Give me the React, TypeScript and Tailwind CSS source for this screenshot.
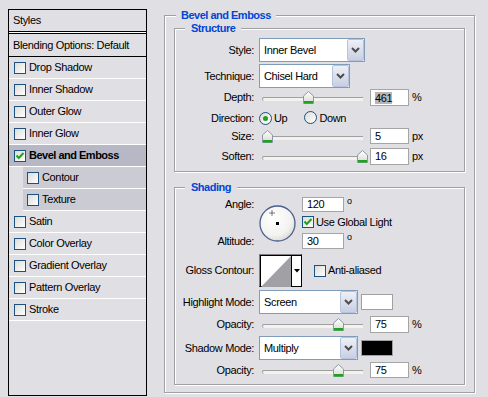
import React from "react";

const FONT = { fontFamily: '"Liberation Sans", Arial, sans-serif' };

function CheckMark() {
  return (
    <svg width="10" height="10" viewBox="0 0 10 10" className="absolute left-[0px] top-[0px]">
      <path d="M1.5 4.5 L3.8 7 L8.5 2" fill="none" stroke="#21a121" strokeWidth="2" />
    </svg>
  );
}

function Checkbox({ checked = false }: { checked?: boolean }) {
  return (
    <span className="relative inline-block shrink-0 w-[12px] h-[12px] border border-[#1c5180] bg-gradient-to-br from-[#dcdcd7] to-white">
      {checked && <CheckMark />}
    </span>
  );
}

function Radio({ checked = false }: { checked?: boolean }) {
  return (
    <span className="relative inline-flex items-center justify-center shrink-0 w-[13px] h-[13px] rounded-full border border-[#1c5180] bg-gradient-to-br from-[#dcdcd7] to-white">
      {checked && <span className="w-[5px] h-[5px] rounded-full bg-[#21a121]" />}
    </span>
  );
}

function Chevron() {
  return (
    <svg width="9" height="6" viewBox="0 0 9 6">
      <path d="M1 1 L4.5 4.5 L8 1" fill="none" stroke="#4d4d4d" strokeWidth="2" />
    </svg>
  );
}

function Select({ value, className }: { value: string; className: string }) {
  return (
    <div className={`flex h-[24px] border border-[#7f9db9] bg-white ${className}`}>
      <div className="flex-1 pl-[4px] flex items-center text-black">{value}</div>
      <div className="w-[17px] h-full flex items-center justify-center border border-[#b4c3df] rounded-[2px] bg-gradient-to-b from-[#eef0f6] to-[#c9cfe2]">
        <Chevron />
      </div>
    </div>
  );
}

function Input({ value, className, selected = false }: { value: string; className: string; selected?: boolean }) {
  return (
    <div className={`flex items-center border border-[#a5a5a5] bg-white pl-[4px] ${className}`}>
      {selected ? <span className="bg-[#b5b6bd] leading-[12px]">{value}</span> : <span>{value}</span>}
    </div>
  );
}

function Thumb() {
  return (
    <svg width="11" height="13" viewBox="0 0 11 13">
      <defs>
        <linearGradient id="tg" x1="0" y1="0" x2="0" y2="1">
          <stop offset="0" stopColor="#ffffff" />
          <stop offset="1" stopColor="#d8d8d4" />
        </linearGradient>
      </defs>
      <path d="M0.5 12.5 V5 L5.5 0.5 L10.5 5 V12.5 Z" fill="url(#tg)" stroke="#8a9aa8" />
      <rect x="1" y="10" width="9" height="2.5" fill="#21a121" />
    </svg>
  );
}

function Slider({ thumb }: { thumb: string }) {
  return (
    <div className="relative w-[106px] h-[13px] ml-[3px]">
      <div className="absolute left-0 top-[6px] w-[101px] h-[4px] border-t border-l border-[#a0a0a0] rounded-l-full bg-[#f3f2ec]" />
      <div className={`absolute top-0 ${thumb}`}>
        <Thumb />
      </div>
    </div>
  );
}

function Label({ children }: { children: React.ReactNode }) {
  return <div className="w-[79px] shrink-0 text-right whitespace-nowrap">{children}</div>;
}

function SliderRow({ label, thumb, value, unit, hclass, selected = false }: { label: string; thumb: string; value: string; unit: string; hclass: string; selected?: boolean }) {
  return (
    <div className={`flex items-center ${hclass}`}>
      <Label>{label}</Label>
      <div className="ml-[5px] flex items-center">
        <Slider thumb={thumb} />
        <Input value={value} selected={selected} className={`ml-[2px] w-[39px] ${hclass}`} />
        <span className="ml-[3px]">{unit}</span>
      </div>
    </div>
  );
}

function Group({ title, className, titleGap, children }: { title: string; className: string; titleGap: string; children: React.ReactNode }) {
  return (
    <div className={`relative border border-[#a0a0a4] shadow-[inset_1px_1px_0_#ffffff,1px_1px_0_#ffffff] ${className}`}>
      <div className={`absolute top-[-8px] bg-[#e0dfe3] text-[#0046d5] font-bold tracking-[-0.5px] leading-[14px] ${titleGap}`}>{title}</div>
      {children}
    </div>
  );
}

function StyleRow({ label, checked = false, bold = false, indent = false, highlight = false }: { label: string; checked?: boolean; bold?: boolean; indent?: boolean; highlight?: boolean }) {
  if (indent) {
    return (
      <div className="flex h-[22px]">
        <div className="w-[14px]" />
        <div className="flex-1 flex items-center bg-[#cacbd3] border-b border-white pl-[4px]">
          <Checkbox />
          <span className="ml-[3px]">{label}</span>
        </div>
      </div>
    );
  }
  return (
    <div className={`flex items-center h-[22px] border-b border-white pl-[5px] ${highlight ? "bg-[#b6b8c6]" : ""}`}>
      <Checkbox checked={checked} />
      <span className={`ml-[3px] ${bold ? "font-bold tracking-[-0.5px]" : ""}`}>{label}</span>
    </div>
  );
}

export default function App() {
  return (
    <div style={FONT} className="w-[488px] h-[397px] bg-[#e0dfe3] flex pt-[9px] pl-[8px] text-[11px] tracking-[-0.35px] text-black leading-none overflow-hidden">
      {/* Left Styles panel */}
      <div className="w-[139px] h-[387px] border border-black flex flex-col shrink-0">
        <div className="h-[22px] flex items-center pl-[4px] border-b border-black">Styles</div>
        <div className="h-[1px] bg-white" />
        <div className="h-[24px] flex items-center pl-[4px] border-t border-b border-black">Blending Options: Default</div>
        <StyleRow label="Drop Shadow" />
        <StyleRow label="Inner Shadow" />
        <StyleRow label="Outer Glow" />
        <StyleRow label="Inner Glow" />
        <StyleRow label="Bevel and Emboss" checked bold highlight />
        <StyleRow label="Contour" indent />
        <StyleRow label="Texture" indent />
        <StyleRow label="Satin" />
        <StyleRow label="Color Overlay" />
        <StyleRow label="Gradient Overlay" />
        <StyleRow label="Pattern Overlay" />
        <StyleRow label="Stroke" />
      </div>

      {/* Right panel */}
      <Group title="Bevel and Emboss" className="ml-[17px] mt-[6px] w-[311px] h-[378px] shrink-0" titleGap="left-[11px] px-[5px]">
        <div className="flex flex-col pl-[9px] pt-[12px]">
          <Group title="Structure" className="w-[291px] h-[144px]" titleGap="left-[10px] px-[6px]">
            <div className="flex flex-col pt-[9px]">
              <div className="flex items-center h-[24px]">
                <Label>Style:</Label>
                <Select value="Inner Bevel" className="ml-[5px] w-[106px]" />
              </div>
              <div className="flex items-center h-[24px] mt-[2px]">
                <Label>Technique:</Label>
                <Select value="Chisel Hard" className="ml-[5px] w-[91px]" />
              </div>
              <div className="mt-[1px]">
                <SliderRow label="Depth:" thumb="left-[41px]" value="461" unit="%" hclass="h-[17px]" selected />
              </div>
              <div className="flex items-center h-[13px] mt-[6px]">
                <Label>Direction:</Label>
                <div className="ml-[5px] flex items-center">
                  <Radio checked />
                  <span className="ml-[2px]">Up</span>
                  <span className="ml-[17px]"><Radio /></span>
                  <span className="ml-[2px]">Down</span>
                </div>
              </div>
              <div className="mt-[3px]">
                <SliderRow label="Size:" thumb="left-0" value="5" unit="px" hclass="h-[16px]" />
              </div>
              <div className="mt-[4px]">
                <SliderRow label="Soften:" thumb="left-[95px]" value="16" unit="px" hclass="h-[17px]" />
              </div>
            </div>
          </Group>

          <Group title="Shading" className="mt-[15px] w-[291px] h-[198px]" titleGap="left-[10px] px-[6px]">
            <div className="flex flex-col pt-[9px]">
              <div className="flex h-[52px]">
                <div className="w-[79px] shrink-0 flex flex-col justify-between text-right">
                  <div className="h-[15px] flex items-center justify-end">Angle:</div>
                  <div className="h-[16px] flex items-center justify-end">Altitude:</div>
                </div>
                <div className="ml-[5px] mt-[8px]">
                  <svg width="37" height="37" viewBox="0 0 37 37">
                    <defs>
                      <radialGradient id="dg" cx="0.4" cy="0.35" r="0.7">
                        <stop offset="0" stopColor="#ffffff" />
                        <stop offset="0.7" stopColor="#f2f2ef" />
                        <stop offset="1" stopColor="#d8d8d4" />
                      </radialGradient>
                    </defs>
                    <circle cx="18.5" cy="18.5" r="17.5" fill="url(#dg)" stroke="#4b5f8e" strokeWidth="1.3" />
                    <path d="M13 5.5 V10.5 M10.5 8 H15.5" stroke="#000" strokeWidth="1" strokeDasharray="1 1" />
                    <rect x="17" y="17" width="3" height="3" fill="#000" />
                  </svg>
                </div>
                <div className="ml-[6px] flex flex-col">
                  <div className="flex items-start h-[15px]">
                    <Input value="120" className="w-[42px] h-[15px]" />
                    <span className="ml-[3px] text-[9px] leading-[9px]">o</span>
                  </div>
                  <div className="flex items-center h-[12px] mt-[4px]">
                    <Checkbox checked />
                    <span className="ml-[2px]">Use Global Light</span>
                  </div>
                  <div className="flex items-start h-[16px] mt-[5px]">
                    <Input value="30" className="w-[42px] h-[16px]" />
                    <span className="ml-[3px] text-[9px] leading-[9px]">o</span>
                  </div>
                </div>
              </div>

              <div className="flex items-center h-[33px] mt-[5px]">
                <Label>Gloss Contour:</Label>
                <div className="ml-[5px] flex w-[43px] h-[33px] border border-[#808080] border-r-black border-b-black">
                  <div className="flex-1 border-l border-t border-black bg-white relative">
                    <svg width="30" height="31" viewBox="0 0 30 31" className="block">
                      <path d="M0 31 L30 0 L30 31 Z" fill="#a1a1a5" />
                    </svg>
                  </div>
                  <div className="w-[10px] border-l border-t border-black bg-white flex items-center justify-center">
                    <svg width="6" height="4" viewBox="0 0 6 4">
                      <path d="M0 0 H6 L3 3.5 Z" fill="#000" />
                    </svg>
                  </div>
                </div>
                <div className="ml-[12px] flex items-center">
                  <Checkbox />
                  <span className="ml-[2px]">Anti-aliased</span>
                </div>
              </div>

              <div className="flex items-center h-[24px] mt-[3px]">
                <Label>Highlight Mode:</Label>
                <Select value="Screen" className="ml-[5px] w-[99px]" />
                <div className="ml-[3px] w-[32px] h-[16px] border border-[#a0a0a0] bg-white" />
              </div>
              <div className="mt-[2px]">
                <SliderRow label="Opacity:" thumb="left-[71px]" value="75" unit="%" hclass="h-[17px]" />
              </div>
              <div className="flex items-center h-[24px] mt-[3px]">
                <Label>Shadow Mode:</Label>
                <Select value="Multiply" className="ml-[5px] w-[99px]" />
                <div className="ml-[3px] w-[32px] h-[16px] border border-[#a0a0a0] bg-black" />
              </div>
              <div className="mt-[2px]">
                <SliderRow label="Opacity:" thumb="left-[71px]" value="75" unit="%" hclass="h-[16px]" />
              </div>
            </div>
          </Group>
        </div>
      </Group>
    </div>
  );
}
